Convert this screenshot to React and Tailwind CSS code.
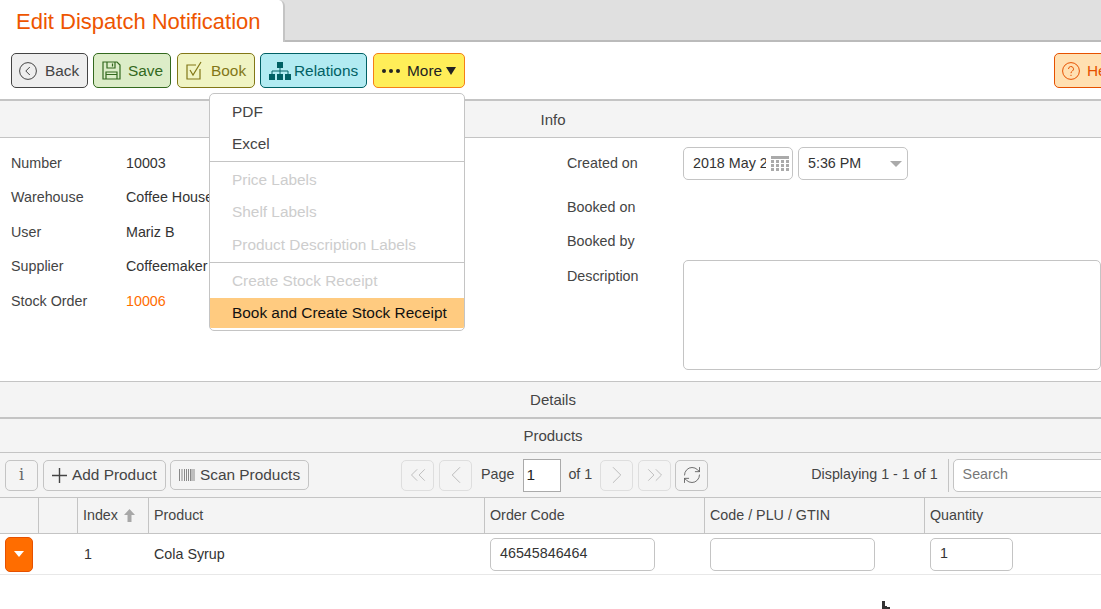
import {
  ChevronLeft,
  ChevronRight,
  ChevronsLeft,
  ChevronsRight,
  RefreshCw,
} from "lucide-react";

const Btn = ({ cls, children }) => (
  <div className={`h-[35px] shrink-0 flex items-center rounded-[5px] border text-[15.4px] ${cls}`}>{children}</div>
);

const GhostBtn = ({ children, dim }) => (
  <div className={`w-[33px] h-[31px] shrink-0 flex items-center justify-center rounded-[5px] border ${dim ? "border-[#dedede] text-[#bdbdbd]" : "border-[#c4c4c4] text-[#555]"}`}>
    {children}
  </div>
);

const Section = ({ title, cls }) => (
  <div className={`flex items-center justify-center pl-[5px] pt-[2px] bg-[#f4f4f4] border-[#c4c4c4] text-[15px] text-[#444] ${cls}`}>{title}</div>
);

const Field = ({ label, value, valueCls = "text-[#333]" }) => (
  <div className="flex items-center h-[34.6px]">
    <div className="w-[115px] text-[#444]">{label}</div>
    <div className={`whitespace-nowrap ${valueCls}`}>{value}</div>
  </div>
);

const HeadCell = ({ cls, children }) => (
  <div className={`h-full flex items-center border-r border-[#c4c4c4] pl-[5px] ${cls}`}>{children}</div>
);

const MenuItem = ({ children, dim, active, cls }) => (
  <div className={`flex items-center pl-[22px] whitespace-nowrap ${cls} ${dim ? "text-[#cdcdcd]" : active ? "text-[#111] bg-[#ffcb80]" : "text-[#444]"}`}>{children}</div>
);

export default function App() {
  return (
    <div className="relative w-[1101px] h-[609px] overflow-hidden bg-white text-[14.3px] font-['Liberation_Sans',Arial,sans-serif]">
      {/* Title tab */}
      <div className="h-[42px] flex bg-[#e0e0e0] border-b-2 border-[#bbb]">
        <div className="w-[285px] h-[42px] pl-[16px] pt-[7px] bg-white border-r-2 border-[#c4c4c4] rounded-tr-[6px] text-[22px] leading-[29px] text-[#ee5500]">Edit Dispatch Notification</div>
      </div>

      {/* Toolbar */}
      <div className="h-[57px] pt-[11px] pl-[11px] flex gap-[5px] relative">
        <Btn cls="w-[77px] bg-[#eeeeee] border-[#444] text-[#444] pl-[7px] gap-[8px]">
          <svg width="18" height="18" viewBox="0 0 18 18" fill="none" stroke="#444" strokeWidth="1"><circle cx="9" cy="9" r="8.4" /><path d="M10.8 5 6.8 9l4 4" /></svg>
          Back
        </Btn>
        <Btn cls="w-[78px] bg-[#dcedc8] border-[#33691e] text-[#33691e] pl-[8px] gap-[7px]">
          <svg width="19" height="19" viewBox="0 0 19 19" fill="none" stroke="#33691e" strokeWidth="1.2"><path d="M1 1h14l3 3v14H1z" /><path d="M5 1v6h8V1M10.500 2.500v3M4 18v-7h11v7M4 13.500h11" /></svg>
          Save
        </Btn>
        <Btn cls="ml-[1px] w-[78px] bg-[#f0f4c3] border-[#827717] text-[#827717] pl-[8px] gap-[9px]">
          <svg width="16" height="19" viewBox="0 0 16 19" fill="none" stroke="#827717" strokeWidth="1.2"><path d="M10 4H1v14h13V8" /><path d="m4 9 3 5 8-13" /></svg>
          Book
        </Btn>
        <Btn cls="w-[107px] bg-[#b2ebf2] border-[#006064] text-[#006064] pl-[8px] gap-[3px]">
          <svg width="22" height="18" viewBox="0 0 22 18"><path fill="#006064" d="M8 0h6v6H8zM0 12h6v6H0zM8 12h6v6H8zM16 12h6v6h-6z" /><path fill="none" stroke="#006064" d="M11 6v6M3 12V9h16v3" /></svg>
          Relations
        </Btn>
        <Btn cls="ml-[1px] w-[92px] bg-[#ffee58] border-[#f57f17] text-[#222] pl-[8px]">
          <span className="flex gap-[3px] mr-[7px]">
            <span className="w-[4px] h-[4px] rounded-full bg-[#222]" />
            <span className="w-[4px] h-[4px] rounded-full bg-[#222]" />
            <span className="w-[4px] h-[4px] rounded-full bg-[#222]" />
          </span>
          More
          <svg className="ml-[4px]" width="10" height="8" viewBox="0 0 10 8"><path fill="#222" d="M0 0h10L5 8z" /></svg>
        </Btn>
        <div className="absolute left-[1054px] top-[11px]">
          <Btn cls="w-[90px] bg-[#ffe0b2] border-[#e65100] text-[#e65100] pl-[7px] gap-[7px]">
            <svg width="18" height="18" viewBox="0 0 18 18" fill="none" stroke="#e65100" strokeWidth="1"><circle cx="9" cy="9" r="8.400" /><path d="M6.500 7a2.500 2.500 0 1 1 3.700 2.200c-.8.500-1.200 1-1.200 2" /><path d="M9 12.800v1.200" /></svg>
            Help
          </Btn>
        </div>
      </div>

      <Section title="Info" cls="h-[38px] border-t-2" />

      {/* Form */}
      <div className="h-[244px] border-t border-[#c4c4c4] pl-[11px] flex">
        <div className="w-[556px] pt-[8px]">
          <Field label="Number" value="10003" />
          <Field label="Warehouse" value="Coffee House" />
          <Field label="User" value="Mariz B" />
          <Field label="Supplier" value="Coffeemaker" />
          <Field label="Stock Order" value="10006" valueCls="text-[#ff6d00]" />
        </div>
        <div className="flex-1 pt-[9px]">
          <div className="flex items-center h-[33px]">
            <div className="w-[116px] text-[#444]">Created on</div>
            <div className="w-[110px] h-[33px] flex items-center justify-between pl-[9px] pr-[3px] rounded-[5px] border border-[#c4c4c4] text-[#333]">
              <span className="w-[73px] overflow-hidden whitespace-nowrap">2018 May 25</span>
              <svg width="18" height="16" viewBox="0 0 18 16"><path fill="#aaa" d="M0 0h18v3H0zM0 4h3v3H0zM5 4h3v3H5zM10 4h3v3h-3zM15 4h3v3h-3zM0 8h3v3H0zM5 8h3v3H5zM10 8h3v3h-3zM15 8h3v3h-3zM0 12h3v3H0zM5 12h3v3H5zM10 12h3v3h-3zM15 12h3v3h-3z" /></svg>
            </div>
            <div className="ml-[5px] w-[110px] h-[33px] flex items-center justify-between pl-[9px] pr-[5px] rounded-[5px] border border-[#c4c4c4] text-[#333]">
              5:36 PM
              <svg width="12" height="6" viewBox="0 0 12 6"><path fill="#aaa" d="M0 0h12L6 6z" /></svg>
            </div>
          </div>
          <div className="h-[11px]" />
          <div className="h-[34px] flex items-center text-[#444]">Booked on</div>
          <div className="h-[34px] flex items-center text-[#444]">Booked by</div>
          <div className="flex mt-[1px]">
            <div className="w-[116px] pt-[7px] text-[#444] leading-[18px]">Description</div>
            <div className="w-[418px] h-[110px] rounded-[5px] border border-[#c4c4c4]" />
          </div>
        </div>
      </div>

      <Section title="Details" cls="h-[36px] border-t" />
      <Section title="Products" cls="h-[35px] border-t-2" />

      {/* Products toolbar */}
      <div className="h-[45px] bg-[#f4f4f4] border-t border-[#c4c4c4] relative flex items-center pl-[5px] text-[15.4px] text-[#444]">
        <div className="w-[33px] h-[31px] shrink-0 flex items-center justify-center rounded-[5px] border border-[#c4c4c4] font-['DejaVu_Serif',serif] text-[16px] text-[#666]">i</div>
        <div className="ml-[5px] w-[123px] h-[31px] shrink-0 flex items-center pl-[8px] gap-[5px] rounded-[5px] border border-[#c4c4c4] whitespace-nowrap">
          <svg width="15" height="15" viewBox="0 0 15 15" stroke="#444" strokeWidth="1.400"><path d="M7.500 0v15M0 7.500h15" /></svg>
          Add Product
        </div>
        <div className="ml-[4px] w-[139px] h-[30px] shrink-0 flex items-center pl-[8px] gap-[5px] rounded-[5px] border border-[#c4c4c4] whitespace-nowrap">
          <svg width="16" height="12" viewBox="0 0 16 12" stroke="#888"><path d="M.5 0v12M3 0v12M5.500 0v12M7.500 0v12M9.500 0v12M11.500 0v12M13 0v12M15 0v12" /></svg>
          Scan Products
        </div>
        <div className="ml-[92px] shrink-0 flex items-center gap-[5px] text-[14.3px] whitespace-nowrap">
          <GhostBtn dim><ChevronsLeft size={26} strokeWidth={0.9} /></GhostBtn>
          <GhostBtn dim><ChevronLeft size={30} strokeWidth={0.8} /></GhostBtn>
          <span className="ml-[4px]">Page</span>
          <div className="ml-[4px] w-[38px] h-[33px] pl-[2px] flex items-center bg-white border border-[#aaa] text-[#222] text-[15.4px]">1</div>
          <span className="ml-[2px] mr-[3px]">of 1</span>
          <GhostBtn dim><ChevronRight size={30} strokeWidth={0.8} /></GhostBtn>
          <GhostBtn dim><ChevronsRight size={26} strokeWidth={0.9} /></GhostBtn>
          <div className="-ml-[1px]"><GhostBtn><RefreshCw size={20} strokeWidth={1} /></GhostBtn></div>
        </div>
        <span className="ml-[103px] shrink-0 text-[14.3px] whitespace-nowrap">Displaying 1 - 1 of 1</span>
        <div className="ml-[10px] h-[33px] shrink-0 border-l border-[#c4c4c4]" />
        <div className="ml-[4px] w-[160px] h-[33px] shrink-0 pl-[9px] flex items-center bg-white rounded-l-[5px] border border-[#c4c4c4] text-[14.3px] text-[#777]">Search</div>
      </div>

      {/* Grid */}
      <div className="h-[37px] flex items-center bg-[#f4f4f4] border-y border-[#c4c4c4] text-[#444]">
        <HeadCell cls="w-[39px]" />
        <HeadCell cls="w-[39px]" />
        <HeadCell cls="w-[71px] gap-[6px]">
          Index
          <svg width="11" height="13" viewBox="0 0 11 13"><path fill="#a8a8a8" d="M5.500 0 11 6H7.500v7h-4V6H0z" /></svg>
        </HeadCell>
        <HeadCell cls="w-[336px]">Product</HeadCell>
        <HeadCell cls="w-[220px]">Order Code</HeadCell>
        <HeadCell cls="w-[220px]">Code / PLU / GTIN</HeadCell>
        <div className="pl-[5px]">Quantity</div>
      </div>
      <div className="h-[41px] flex items-center border-b border-[#e8e8e8] text-[#333]">
        <div className="w-[78px] pl-[5px]">
          <div className="w-[28px] h-[35px] flex items-center justify-center rounded-[5px] bg-[#ff6d00] border border-[#e65100]">
            <svg width="10" height="6" viewBox="0 0 10 6"><path fill="#fff" d="M0 0h10L5 6z" /></svg>
          </div>
        </div>
        <div className="w-[71px] pl-[6px] pt-[1px]">1</div>
        <div className="w-[336px] pl-[5px] pt-[1px]">Cola Syrup</div>
        <div className="w-[220px] pl-[5px]">
          <div className="w-[165px] h-[33px] pl-[9px] flex items-center rounded-[5px] border border-[#c4c4c4]">46545846464</div>
        </div>
        <div className="w-[220px] pl-[5px]">
          <div className="w-[165px] h-[33px] rounded-[5px] border border-[#c4c4c4]" />
        </div>
        <div className="pl-[5px]">
          <div className="w-[83px] h-[33px] pl-[9px] flex items-center rounded-[5px] border border-[#c4c4c4]">1</div>
        </div>
      </div>

      {/* More menu */}
      <div className="absolute left-[209px] top-[93px] w-[256px] h-[238px] bg-white rounded-[5px] border border-[#c4c4c4] overflow-hidden text-[15.4px]">
        <MenuItem cls="h-[35px] pt-[1px]">PDF</MenuItem>
        <MenuItem cls="h-[32px] pb-[2px]">Excel</MenuItem>
        <div className="h-[1px] bg-[#c4c4c4]" />
        <MenuItem dim cls="h-[35px] pt-[1px]">Price Labels</MenuItem>
        <MenuItem dim cls="h-[31px] pb-[1px]">Shelf Labels</MenuItem>
        <MenuItem dim cls="h-[34px]">Product Description Labels</MenuItem>
        <div className="h-[1px] bg-[#c4c4c4]" />
        <MenuItem dim cls="h-[35px]">Create Stock Receipt</MenuItem>
        <MenuItem active cls="h-[30px]">Book and Create Stock Receipt</MenuItem>
      </div>

      {/* Mouse cursor clipped by the window edge */}
      <svg className="absolute left-[881px] top-[601px]" width="10" height="8" viewBox="0 0 10 8"><path fill="#333" d="M1 0h3v5h2v1h3v2H1z" /></svg>
    </div>
  );
}
